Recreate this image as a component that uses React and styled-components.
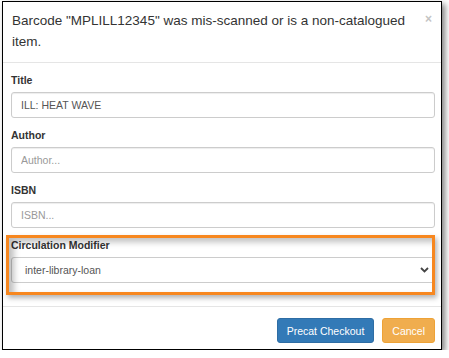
import React from 'react';
import styled, { createGlobalStyle } from 'styled-components';

const GlobalStyle = createGlobalStyle`
  html, body {
    margin: 0;
    padding: 0;
    background: #fff;
    font-family: "Liberation Sans", Arial, sans-serif;
  }
`;

const Frame = styled.div`
  box-sizing: border-box;
  width: 440px;
  height: 349px;
  margin: 1px 0 0 2px;
  border: 1px solid #000;
  background: #fff;
  box-shadow: 3px 3px 6px rgba(0, 0, 0, 0.5);
  overflow: hidden;
  display: flex;
  flex-direction: column;
`;

const Header = styled.div`
  display: flex;
  align-items: flex-start;
  padding: 8px 9px 10px 9px;
  border-bottom: 1px solid #e5e5e5;
`;

const Title = styled.h4`
  flex: 1;
  margin: 0;
  padding-right: 8px;
  font-size: 13.5px;
  font-weight: normal;
  line-height: 21px;
  color: #333;
`;

const Close = styled.button`
  background: none;
  border: none;
  padding: 0;
  margin-top: 3px;
  font-family: inherit;
  font-size: 12px;
  font-weight: bold;
  line-height: 1;
  color: #c4c4c4;
`;

const Body = styled.div`
  padding: 10px 6px 13px 8px;
`;

const Group = styled.div`
  position: relative;
  margin-bottom: 10px;
`;

const Highlighted = styled(Group)`
  &::after {
    content: '';
    position: absolute;
    top: -3px;
    left: -5px;
    right: 0;
    bottom: -12px;
    border: 3px solid #f7871f;
    box-shadow: inset 5px 4px 6px rgba(0, 0, 0, 0.25), 2px 3px 5px rgba(0, 0, 0, 0.3);
    pointer-events: none;
  }
`;

const Label = styled.label`
  display: block;
  margin-bottom: 4px;
  font-size: 10.5px;
  font-weight: bold;
  line-height: 15px;
  color: #333;
`;

const Input = styled.input`
  display: block;
  box-sizing: border-box;
  width: 100%;
  height: 26px;
  margin: 0;
  padding: 0 9px;
  font-family: inherit;
  font-size: 10.5px;
  color: #555;
  border: 1px solid #ccc;
  border-radius: 3px;
  box-shadow: inset 0 1px 1px rgba(0, 0, 0, 0.075);
  outline: none;

  &::placeholder {
    color: #999;
  }
`;

const Select = styled.div`
  box-sizing: border-box;
  height: 26px;
  display: flex;
  align-items: center;
  justify-content: space-between;
  padding: 0 5px 0 13px;
  font-size: 10.5px;
  color: #555;
  border: 1px solid #ccc;
  border-radius: 3px;
  background: #fff;
`;

const Footer = styled.div`
  display: flex;
  justify-content: flex-end;
  gap: 8px;
  padding: 11px 6px 6px;
  border-top: 1px solid #e5e5e5;
`;

const Button = styled.button`
  height: 25px;
  padding: 0 9px;
  font-family: inherit;
  font-size: 10.5px;
  color: #fff;
  border-radius: 3px;
  border: 1px solid ${p => (p.$warn ? '#eea236' : '#2e6da4')};
  background: ${p => (p.$warn ? '#f0ad4e' : '#337ab7')};
`;

const Chevron = () => (
  <svg width="9" height="6" viewBox="0 0 9 6">
    <polyline points="1,1 4.5,4.5 8,1" fill="none" stroke="#444" strokeWidth="1.8" />
  </svg>
);

export default function App() {
  return (
    <>
      <GlobalStyle />
      <Frame>
        <Header>
          <Title>Barcode "MPLILL12345" was mis-scanned or is a non-catalogued item.</Title>
          <Close>×</Close>
        </Header>
        <Body>
          <Group>
            <Label>Title</Label>
            <Input defaultValue="ILL: HEAT WAVE" />
          </Group>
          <Group>
            <Label>Author</Label>
            <Input placeholder="Author..." />
          </Group>
          <Group>
            <Label>ISBN</Label>
            <Input placeholder="ISBN..." />
          </Group>
          <Highlighted>
            <Label>Circulation Modifier</Label>
            <Select>
              <span>inter-library-loan</span>
              <Chevron />
            </Select>
          </Highlighted>
        </Body>
        <Footer>
          <Button>Precat Checkout</Button>
          <Button $warn>Cancel</Button>
        </Footer>
      </Frame>
    </>
  );
}
